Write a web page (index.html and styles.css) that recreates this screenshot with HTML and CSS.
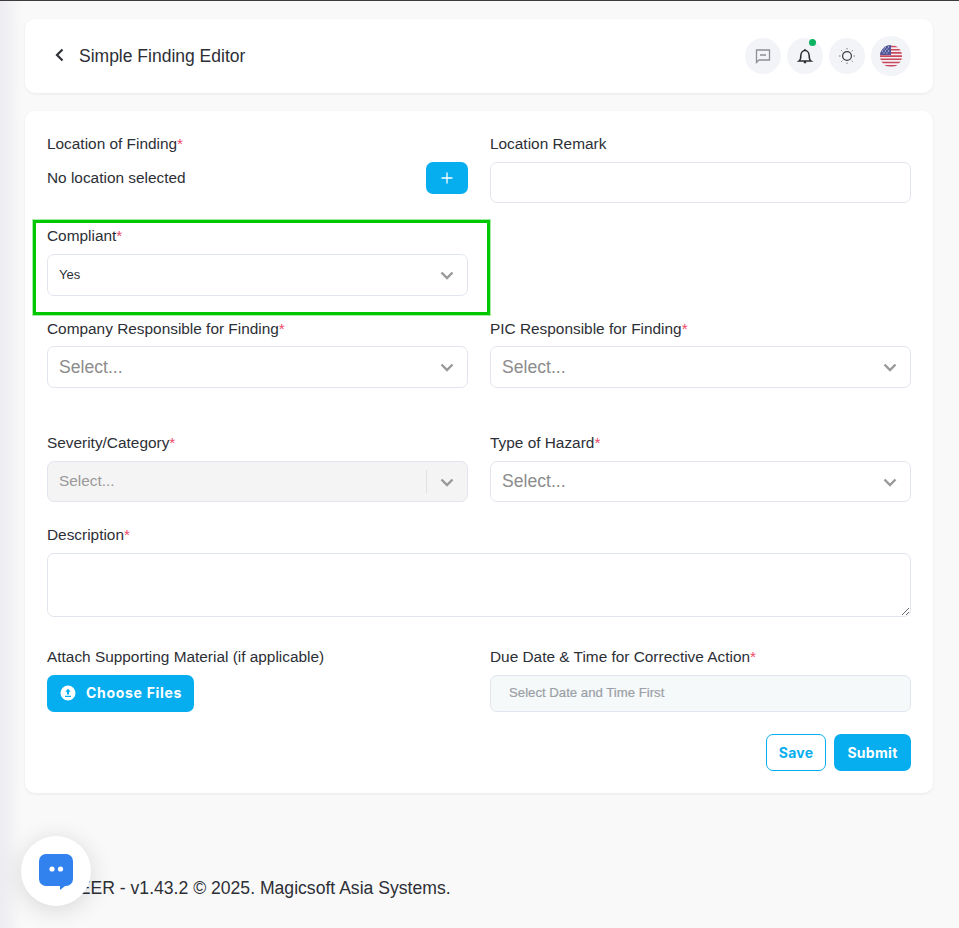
FILE: index.html
```html
<!DOCTYPE html>
<html lang="en">
<head>
<meta charset="utf-8">
<title>Simple Finding Editor</title>
<link rel="stylesheet" href="styles.css">
</head>
<body>
<div class="page">
  <header class="card topbar">
    <div class="title-wrap">
      <svg class="back" width="12" height="14" viewBox="0 0 12 14"><path d="M8.500 1.500 3 7l5.500 5.500" fill="none" stroke="#2f3237" stroke-width="2.200"/></svg>
      <h1>Simple Finding Editor</h1>
    </div>
    <div class="tools">
      <span class="tool"><svg width="18" height="18" viewBox="0 0 18 18"><path d="M2.500 15.500V3h13v10H5l-2.500 2.500ZM6 8h6" fill="none" stroke="#8d8f94" stroke-width="1.300"/></svg></span>
      <span class="tool bell"><svg width="18" height="18" viewBox="0 0 18 18"><path d="M3 14h12c-1.500-1-1.800-2.500-1.800-5 0-3-1.700-5.500-4.200-5.500S4.800 6 4.800 9c0 2.500-.3 4-1.800 5ZM7.800 15.500h2.400M9 2v1.500" fill="none" stroke="#2b2d31" stroke-width="1.500"/></svg><i class="dot"></i></span>
      <span class="tool"><svg width="18" height="18" viewBox="0 0 18 18"><circle cx="9" cy="9" r="4.400" fill="none" stroke="#3a3c40" stroke-width="1.200"/><path d="M9 1v1.500M9 15.500V17M1 9h1.500M15.500 9H17M3.300 3.300l1 1M13.700 13.700l1 1M3.300 14.700l1-1M13.700 4.300l1-1" stroke="#77797d" stroke-width="1"/></svg></span>
      <span class="tool flag-tool"><svg width="22" height="22" viewBox="0 0 22 22"><defs><clipPath id="c"><circle cx="11" cy="11" r="11"/></clipPath></defs><g clip-path="url(#c)"><rect width="22" height="22" fill="#f3eef0"/><path d="M0 1.500h22M0 4.700h22M0 7.900h22M0 11.100h22M0 14.300h22M0 17.500h22M0 20.700h22" stroke="#c9485f" stroke-width="1.600"/><rect width="11" height="10" fill="#50589a"/><path d="M2 2h1M5 2h1M8 2h1M3.500 4h1M6.500 4h1M2 6h1M5 6h1M8 6h1M3.500 8h1M6.500 8h1" stroke="#e7e6f0" stroke-width="1"/></g></svg></span>
    </div>
  </header>

  <main class="card form">
    <div class="row row-location">
      <div class="field">
        <label>Location of Finding<em>*</em></label>
        <div class="loc-line">
          <span>No location selected</span>
          <button class="add" type="button"><svg width="12" height="12" viewBox="0 0 12 12"><path d="M6 .5v11M.5 6h11" stroke="#fff" stroke-width="1.300"/></svg></button>
        </div>
      </div>
      <div class="field">
        <label>Location Remark</label>
        <input class="input" type="text">
      </div>
    </div>

    <div class="row row-compliant">
      <div class="field">
        <label>Compliant<em>*</em></label>
        <div class="select h42"><span class="value">Yes</span><svg class="chev" width="20" height="20" viewBox="0 0 20 20"><path d="M4.500 7.500 10 13l5.500-5.500" fill="none" stroke="#999" stroke-width="2.400"/></svg></div>
      </div>
    </div>

    <div class="row row-company">
      <div class="field">
        <label>Company Responsible for Finding<em>*</em></label>
        <div class="select h42"><span class="ph">Select...</span><svg class="chev" width="20" height="20" viewBox="0 0 20 20"><path d="M4.500 7.500 10 13l5.500-5.500" fill="none" stroke="#999" stroke-width="2.400"/></svg></div>
      </div>
      <div class="field">
        <label>PIC Responsible for Finding<em>*</em></label>
        <div class="select h42"><span class="ph">Select...</span><svg class="chev" width="20" height="20" viewBox="0 0 20 20"><path d="M4.500 7.500 10 13l5.500-5.500" fill="none" stroke="#999" stroke-width="2.400"/></svg></div>
      </div>
    </div>

    <div class="row row-severity">
      <div class="field">
        <label>Severity/Category<em>*</em></label>
        <div class="select disabled"><span class="ph small">Select...</span><i class="sep"></i><svg class="chev" width="20" height="20" viewBox="0 0 20 20"><path d="M4.500 7.500 10 13l5.500-5.500" fill="none" stroke="#999" stroke-width="2.400"/></svg></div>
      </div>
      <div class="field">
        <label>Type of Hazard<em>*</em></label>
        <div class="select"><span class="ph">Select...</span><svg class="chev" width="20" height="20" viewBox="0 0 20 20"><path d="M4.500 7.500 10 13l5.500-5.500" fill="none" stroke="#999" stroke-width="2.400"/></svg></div>
      </div>
    </div>

    <div class="field row-desc">
      <label>Description<em>*</em></label>
      <textarea class="textarea"></textarea>
    </div>

    <div class="row row-attach">
      <div class="field">
        <label>Attach Supporting Material (if applicable)</label>
        <div><button class="btn primary choose" type="button"><svg width="16" height="16" viewBox="0 0 16 16"><circle cx="8" cy="8" r="7.500" fill="#fff"/><path d="M8 3.800 5.300 6.800h1.600v2.600h2.200V6.800h1.600ZM5 10.700h6v1.300H5Z" fill="#06aeef"/></svg>Choose Files</button></div>
      </div>
      <div class="field">
        <label>Due Date &amp; Time for Corrective Action<em>*</em></label>
        <div class="date">Select Date and Time First</div>
      </div>
    </div>

    <div class="actions">
      <button class="btn outline" type="button">Save</button>
      <button class="btn primary" type="button">Submit</button>
    </div>
  </main>

  <footer class="footer">ZEER - v1.43.2 © 2025. Magicsoft Asia Systems.</footer>
</div>

<div class="highlight"></div>
<button class="chat" type="button" aria-label="Chat"><svg width="34" height="38" viewBox="0 0 34 38"><path d="M7 2h20a7 7 0 0 1 7 7v18a7 7 0 0 1-7 7h-1l-5 4v-4H7a7 7 0 0 1-7-7V9a7 7 0 0 1 7-7Z" fill="#3182ee"/><circle cx="13" cy="17" r="2.600" fill="#fff"/><circle cx="21.500" cy="17" r="2.600" fill="#fff"/></svg></button>
</body>
</html>
```

FILE: styles.css
```css
* { box-sizing: border-box; }
html, body { margin: 0; height: 100%; }
body {
  height: 928px;
  overflow: hidden;
  background: linear-gradient(90deg, #ececf1 0, #f3f3f6 12px, #f9f9f9 22px, #f9f9f9 100%);
  border-top: 1px solid #3c3c3c;
  font-family: "Liberation Sans", Arial, sans-serif;
  color: #2d2f36;
}
.page { padding: 18px 26px 0 25px; }
.card {
  background: #fff;
  border-radius: 10px;
  box-shadow: 0 1px 3px rgba(30, 30, 50, .07);
}
.topbar {
  height: 74px;
  display: flex;
  align-items: center;
  justify-content: space-between;
  padding: 0 22px 0 29px;
}
.title-wrap { display: flex; align-items: center; gap: 13px; }
.back { margin-top: -3px; }
h1 { margin: 0; font-size: 17.500px; font-weight: 400; line-height: 24px; }
.tools { display: flex; align-items: center; gap: 6px; }
.tool {
  position: relative;
  width: 36px;
  height: 36px;
  border-radius: 50%;
  background: #f3f4f8;
  display: flex;
  align-items: center;
  justify-content: center;
}
.flag-tool { width: 40px; height: 40px; }
.dot {
  position: absolute;
  top: 1px;
  right: 7px;
  width: 7px;
  height: 7px;
  border-radius: 50%;
  background: #0db262;
}
.form { margin-top: 18px; height: 682px; padding: 23px 22px 0; }
.row { display: grid; grid-template-columns: 421px 421px; column-gap: 22px; }
.field { display: flex; flex-direction: column; min-width: 0; }
label { display: block; font-size: 15.400px; line-height: 20px; color: #2d2f36; }
em { font-style: normal; color: #ef4a68; }
.loc-line {
  display: flex;
  align-items: center;
  justify-content: space-between;
  margin-top: 8px;
  height: 32px;
  font-size: 15.400px;
}
.add {
  width: 42px;
  height: 32px;
  padding: 0;
  border: 0;
  border-radius: 7px;
  background: #06aeef;
  display: flex;
  align-items: center;
  justify-content: center;
}
.input {
  display: block;
  width: 100%;
  height: 41px;
  margin-top: 8px;
  border: 1px solid #e1e5ee;
  border-radius: 7px;
  background: #fff;
}
.row-compliant { margin-top: 23px; }
.row-company { margin-top: 23px; }
.row-severity { margin-top: 45px; }
.row-desc { margin-top: 23px; }
.row-attach { margin-top: 30px; }
.select {
  display: flex;
  align-items: center;
  height: 41px;
  margin-top: 8px;
  padding: 0 10px 0 11px;
  border: 1px solid #e1e5ee;
  border-radius: 7px;
  background: #fff;
}
.h42 { height: 42px; }
.row-company .select { margin-top: 7px; }
.value { flex: 1; padding-bottom: 2px; font-size: 13px; color: #2d2f36; }
.ph { flex: 1; font-size: 17.600px; color: #8c8c8c; }
.ph.small { padding-bottom: 2px; font-size: 15.400px; color: #999; }
.disabled { background: #f4f4f4; }
.sep { width: 1px; height: 23px; margin-right: 10px; background: #e1e1e1; }
.chev { flex: none; }
.textarea {
  display: block;
  width: 100%;
  height: 64px;
  margin-top: 8px;
  border: 1px solid #e1e5ee;
  border-radius: 7px;
  background: #fff;
  resize: vertical;
}
.btn {
  height: 37px;
  border-radius: 7px;
  font-family: Inter, "Liberation Sans", sans-serif;
  font-size: 14px;
  font-weight: 700;
  letter-spacing: .2px;
  cursor: pointer;
}
.primary { border: 0; background: #06aeef; color: #fff; }
.outline { border: 1px solid #06aeef; background: #fff; color: #06aeef; width: 60px; padding: 0; }
.choose {
  display: inline-flex;
  align-items: center;
  gap: 10px;
  width: 147px;
  margin-top: 8px;
  padding: 0 0 2px 13px;
  letter-spacing: .7px;
}
.date {
  display: flex;
  align-items: center;
  height: 37px;
  margin-top: 8px;
  padding: 0 0 2px 18px;
  border: 1px solid #e1e5ee;
  border-radius: 7px;
  background: #f6f9fa;
  font-size: 13.200px;
  color: #9aa0a6;
  -webkit-text-stroke: .2px #9aa0a6;
}
.actions { display: flex; justify-content: flex-end; gap: 8px; margin-top: 22px; }
.actions .primary { width: 77px; padding: 0; letter-spacing: .3px; }
.footer {
  margin-top: 84px;
  padding-left: 43px;
  font-size: 17.600px;
  line-height: 22px;
  color: #2d2f36;
}
.highlight {
  position: absolute;
  left: 33px;
  top: 220px;
  width: 457px;
  height: 95px;
  border: 3px solid #00c800;
  box-shadow: 0 0 0 1px rgba(0, 200, 0, .35);
  pointer-events: none;
}
.chat {
  position: absolute;
  left: 21px;
  top: 836px;
  width: 70px;
  height: 70px;
  padding: 0;
  border: 0;
  border-radius: 50%;
  background: #fff;
  box-shadow: 0 4px 24px rgba(0, 0, 0, .14);
  display: flex;
  align-items: center;
  justify-content: center;
}
```
